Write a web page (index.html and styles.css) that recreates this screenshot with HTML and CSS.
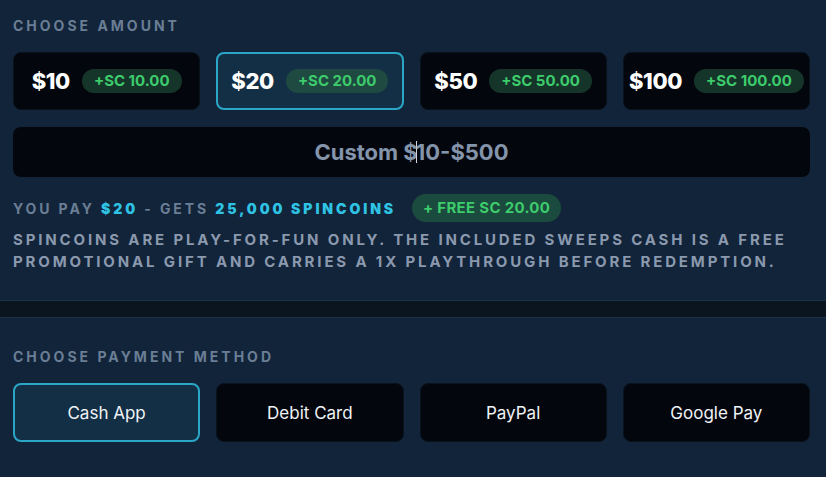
FILE: index.html
```html
<!DOCTYPE html>
<html lang="en">
<head>
  <meta charset="UTF-8">
  <meta name="viewport" content="width=device-width, initial-scale=1.0">
  <title>Buy Spincoins</title>
  <link rel="stylesheet" href="styles.css">
</head>
<body>
  <!-- Amount -->
  <section class="panel amount-panel">
    <h2 class="section-label">Choose Amount</h2>
    <div class="option-grid">
      <button class="amount-card">
        <span class="amount">$10</span>
        <span class="bonus">+SC 10.00</span>
      </button>
      <button class="amount-card selected">
        <span class="amount">$20</span>
        <span class="bonus">+SC 20.00</span>
      </button>
      <button class="amount-card">
        <span class="amount">$50</span>
        <span class="bonus">+SC 50.00</span>
      </button>
      <button class="amount-card">
        <span class="amount">$100</span>
        <span class="bonus">+SC 100.00</span>
      </button>
    </div>

    <div class="custom-field">Custom $<span class="caret"></span>10-$500</div>

    <div class="summary">
      <span>You pay <b>$20</b> - gets <b>25,000 Spincoins</b></span>
      <span class="free-badge">+ FREE SC 20.00</span>
    </div>
    <p class="disclaimer">Spincoins are play-for-fun only. The included sweeps cash is a free promotional gift and carries a 1x playthrough before redemption.</p>
  </section>

  <div class="divider"></div>

  <!-- Payment -->
  <section class="panel payment-panel">
    <h2 class="section-label">Choose Payment Method</h2>
    <div class="option-grid">
      <button class="pay-card selected">Cash App</button>
      <button class="pay-card">Debit Card</button>
      <button class="pay-card">PayPal</button>
      <button class="pay-card">Google Pay</button>
    </div>
  </section>
</body>
</html>
```

FILE: styles.css
```css
body {
  margin: 0;
  background: #12243a;
  font-family: Inter, "Noto Sans", sans-serif;
  color: #fff;
}
.panel {
  padding: 0 16px 0 13px;
}
.amount-panel {
  padding-top: 17px;
  padding-bottom: 27px;
}
.payment-panel {
  padding-top: 30px;
}
.divider {
  height: 16px;
  background: #0a1520;
  border-top: 1px solid #1d3248;
  border-bottom: 1px solid #1d3248;
}
.section-label {
  margin: 0 0 17px;
  font-size: 14px;
  line-height: 18px;
  font-weight: 700;
  letter-spacing: 3px;
  text-transform: uppercase;
  color: #6a7e95;
}
.option-grid {
  display: grid;
  grid-template-columns: repeat(4, 1fr);
  gap: 16px;
}
button {
  font-family: inherit;
  cursor: pointer;
}
.amount-card {
  display: flex;
  align-items: center;
  justify-content: center;
  gap: 12px;
  height: 58px;
  padding: 0;
  background: #03070d;
  border: 1px solid #0a121c;
  border-radius: 8px;
  color: #fff;
  white-space: nowrap;
  overflow: hidden;
}
.amount-card.selected,
.pay-card.selected {
  background: #132f45;
  border: 2px solid #2aa6c6;
}
.amount {
  font-size: 22px;
  font-weight: 800;
  letter-spacing: -0.4px;
}
.bonus {
  padding: 3px 12px;
  border-radius: 12px;
  background: #16352a;
  color: #3dcc6c;
  font-size: 15px;
  line-height: 18px;
  font-weight: 700;
}
.selected .bonus {
  background: #1f4a42;
}
.custom-field {
  display: flex;
  align-items: center;
  justify-content: center;
  height: 50px;
  margin-top: 17px;
  background: #03070d;
  border-radius: 8px;
  color: #8394ab;
  font-size: 22px;
  font-weight: 700;
}
.caret {
  display: inline-block;
  width: 1px;
  height: 22px;
  margin: 0 -1px 0 -2px;
  background: #d0d6de;
}
.summary {
  display: flex;
  align-items: center;
  gap: 16px;
  height: 28px;
  margin-top: 17px;
  font-size: 14px;
  font-weight: 700;
  letter-spacing: 2.9px;
  text-transform: uppercase;
  color: #6a7e95;
}
.summary b {
  color: #2ec3e4;
}
.free-badge {
  padding: 5px 11px;
  border-radius: 14px;
  background: #1b4a3e;
  color: #3dcc6c;
  font-size: 15px;
  line-height: 18px;
  letter-spacing: 0.3px;
}
.disclaimer {
  margin: 7px 0 0;
  font-size: 15px;
  font-weight: 700;
  line-height: 22px;
  letter-spacing: 2.85px;
  text-transform: uppercase;
  color: #8b99ae;
}
.pay-card {
  height: 59px;
  background: #03070d;
  border: 1px solid #0a121c;
  border-radius: 8px;
  color: #f0f3f6;
  font-size: 17px;
}
```
